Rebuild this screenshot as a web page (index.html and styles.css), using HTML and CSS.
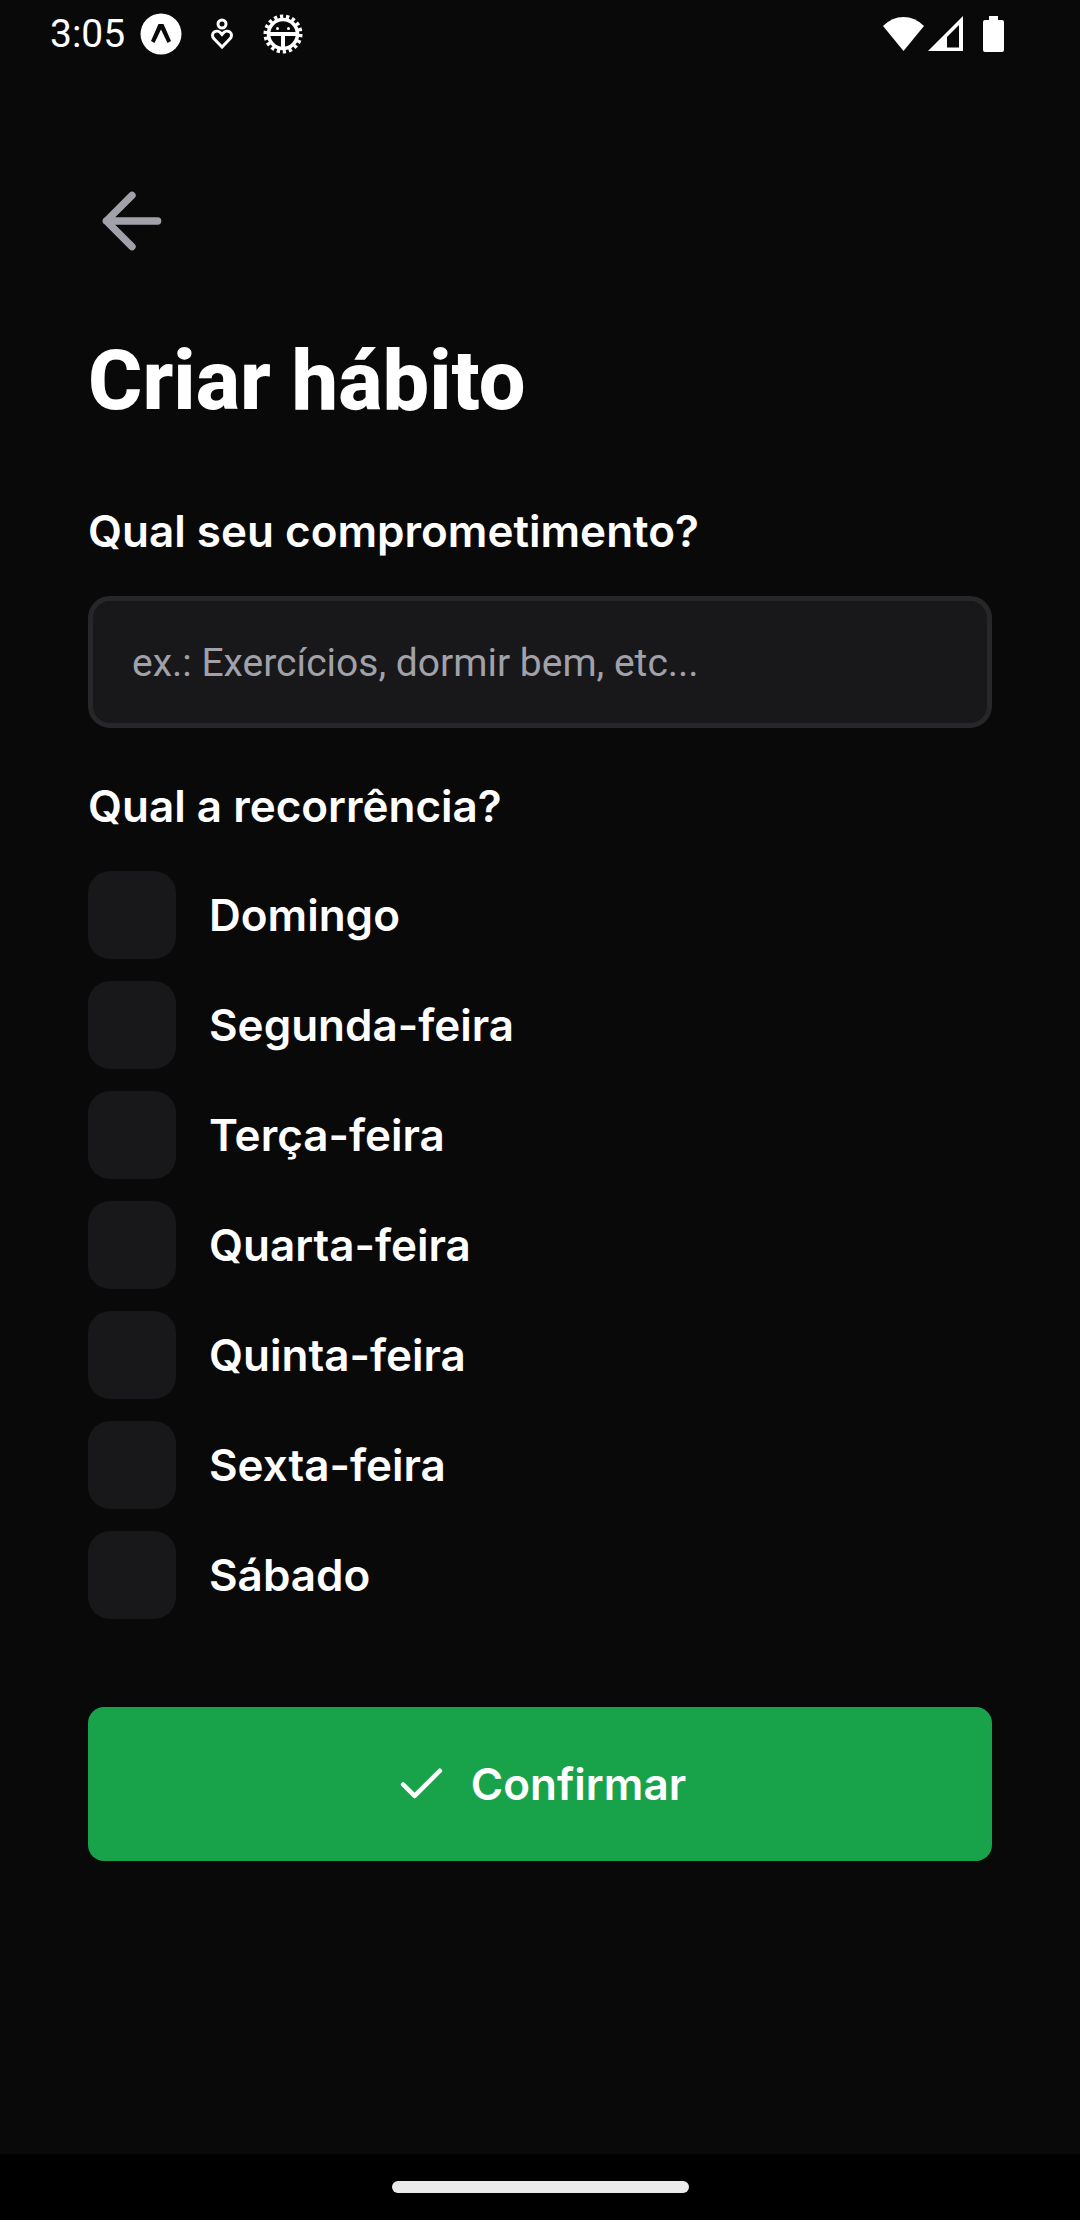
FILE: index.html
```html
<!DOCTYPE html>
<html lang="pt-BR">
<head>
<meta charset="utf-8">
<meta name="viewport" content="width=device-width, initial-scale=1">
<title>Criar hábito</title>
<link rel="stylesheet" href="styles.css">
</head>
<body>
<div class="screen">
  <header class="status-bar">
    <div class="status-group">
      <span class="clock">3:05</span>
      <svg class="status-icon" viewBox="0 0 42 42" aria-hidden="true">
        <circle cx="21" cy="21" r="20.5" fill="#fff"/>
        <path d="M18.500 11h5l7.500 17-3.500 2L21 16.500 14.500 30 11 28z" fill="#09090a"/>
      </svg>
      <svg class="status-icon" viewBox="0 0 42 42" fill="none" stroke="#fff" stroke-width="3" aria-hidden="true">
        <circle cx="21" cy="11" r="4"/>
        <path d="M21 34l-8-8.200c-2-2-2-5 0-6.600 2-1.600 5-1.200 6.500.600L21 21.500l1.500-1.700c1.500-1.800 4.500-2.200 6.500-.600 2 1.600 2 4.600 0 6.600z"/>
      </svg>
      <svg class="status-icon" viewBox="0 0 42 42" fill="none" stroke="#fff" aria-hidden="true">
        <circle cx="21" cy="21" r="17.500" stroke-width="4" pathLength="108" stroke-dasharray="3.200 2.800"/>
        <circle cx="21" cy="21" r="14.500" stroke-width="3.600"/>
        <path d="M7 21h28M21 21v14" stroke-width="4"/>
        <circle cx="15.500" cy="15.500" r="1.500" fill="#fff" stroke="none"/>
        <circle cx="26.500" cy="15.500" r="1.500" fill="#fff" stroke="none"/>
      </svg>
    </div>
    <div class="status-group status-group-end">
      <svg class="wifi" viewBox="0 0 41 36" fill="#fff" aria-hidden="true"><path d="M0 10Q9 1 20.500 1T41 10L20.500 35z"/></svg>
      <svg class="signal" viewBox="0 0 35 36" aria-hidden="true">
        <path d="M35 0v35H0z" fill="#fff"/>
        <path d="M31 9v22.500H19V21z" fill="#09090a"/>
      </svg>
      <svg class="battery" viewBox="0 0 21 36" fill="#fff" aria-hidden="true"><path d="M6 0h9v4h4q2 0 2 2v28q0 2-2 2H2q-2 0-2-2V6q0-2 2-2h4z"/></svg>
    </div>
  </header>

  <main class="content">
    <button class="back" type="button" aria-label="Voltar">
      <svg class="back-icon" viewBox="0 0 24 24" aria-hidden="true"><path d="M19 12H5M12 19l-7-7 7-7"/></svg>
    </button>
    <h1 class="title">Criar hábito</h1>
    <form class="form">
      <label class="label" for="habit">Qual seu comprometimento?</label>
      <input class="text-input" id="habit" type="text" placeholder="ex.: Exercícios, dormir bem, etc...">
      <fieldset class="days">
        <legend class="label">Qual a recorrência?</legend>
        <div class="day-list">
          <label class="day"><input class="day-box" type="checkbox" name="day" value="0">Domingo</label>
          <label class="day"><input class="day-box" type="checkbox" name="day" value="1">Segunda-feira</label>
          <label class="day"><input class="day-box" type="checkbox" name="day" value="2">Terça-feira</label>
          <label class="day"><input class="day-box" type="checkbox" name="day" value="3">Quarta-feira</label>
          <label class="day"><input class="day-box" type="checkbox" name="day" value="4">Quinta-feira</label>
          <label class="day"><input class="day-box" type="checkbox" name="day" value="5">Sexta-feira</label>
          <label class="day"><input class="day-box" type="checkbox" name="day" value="6">Sábado</label>
        </div>
      </fieldset>
      <button class="confirm" type="submit">
        <svg class="confirm-icon" viewBox="0 0 24 24" aria-hidden="true"><path d="M20 6L9 17l-5-5"/></svg>
        Confirmar
      </button>
    </form>
  </main>

  <footer class="nav-bar"><div class="nav-handle"></div></footer>
</div>
</body>
</html>
```
FILE: styles.css
```css
* {
  box-sizing: border-box;
}

body {
  margin: 0;
  background: #09090a;
  color: #fff;
  font-family: Inter, sans-serif;
}

.screen {
  display: flex;
  flex-direction: column;
  min-height: 100vh;
}

.status-bar {
  display: flex;
  align-items: center;
  justify-content: space-between;
  height: 67px;
  padding: 0 76px 0 50px;
}

.status-group {
  display: flex;
  align-items: center;
  gap: 19px;
}

.status-group-end {
  gap: 4px;
}

.clock {
  margin-right: -4px;
  font: 400 39px/46px Roboto, sans-serif;
}

.status-icon {
  width: 42px;
  height: 42px;
}

.wifi {
  width: 41px;
  height: 36px;
}

.signal {
  width: 35px;
  height: 36px;
}

.battery {
  width: 21px;
  height: 36px;
  margin-left: 16px;
}

.content {
  flex: 1;
  padding: 110px 88px 88px;
}

.back {
  display: block;
  padding: 0;
  border: 0;
  background: none;
}

.back-icon,
.confirm-icon {
  display: block;
  fill: none;
  stroke: #a1a1aa;
  stroke-width: 2;
  stroke-linecap: round;
  stroke-linejoin: round;
}

.back-icon {
  width: 88px;
  height: 88px;
}

.title {
  margin: 66px 0;
  font: 800 83px/100px Roboto, sans-serif;
}

.form {
  display: flex;
  flex-direction: column;
}

.label {
  padding: 0;
  font-size: 44px;
  font-weight: 600;
  line-height: 68px;
}

.text-input {
  width: 100%;
  height: 132px;
  margin: 31px 0 44px;
  padding: 2px 39px 0;
  border: 5px solid #27272a;
  border-radius: 22px;
  background: #18181b;
  color: #fff;
  font: 400 39px/46px Roboto, sans-serif;
}

.text-input::placeholder {
  color: #a1a1aa;
  opacity: 1;
}

.days {
  min-width: 0;
  margin: 0;
  padding: 0;
  border: 0;
}

.day-list {
  display: grid;
  gap: 22px;
  padding-top: 31px;
}

.day {
  display: flex;
  align-items: center;
  gap: 33px;
  font-size: 44px;
  font-weight: 600;
  line-height: 66px;
}

.day-box {
  appearance: none;
  width: 88px;
  height: 88px;
  margin: 0;
  border-radius: 22px;
  background: #18181b;
}

.day-box:checked {
  background: #16a34a;
}

.confirm {
  display: flex;
  align-items: center;
  justify-content: center;
  gap: 22px;
  height: 154px;
  margin-top: 88px;
  border: 0;
  border-radius: 16px;
  background: #18a34a;
  color: #fff;
  font: 600 44px/66px Inter, sans-serif;
}

.confirm-icon {
  width: 55px;
  height: 55px;
  stroke: #fff;
}

.nav-bar {
  display: flex;
  align-items: center;
  justify-content: center;
  height: 66px;
  background: #000;
}

.nav-handle {
  width: 297px;
  height: 12px;
  border-radius: 6px;
  background: #ebebeb;
}
```
